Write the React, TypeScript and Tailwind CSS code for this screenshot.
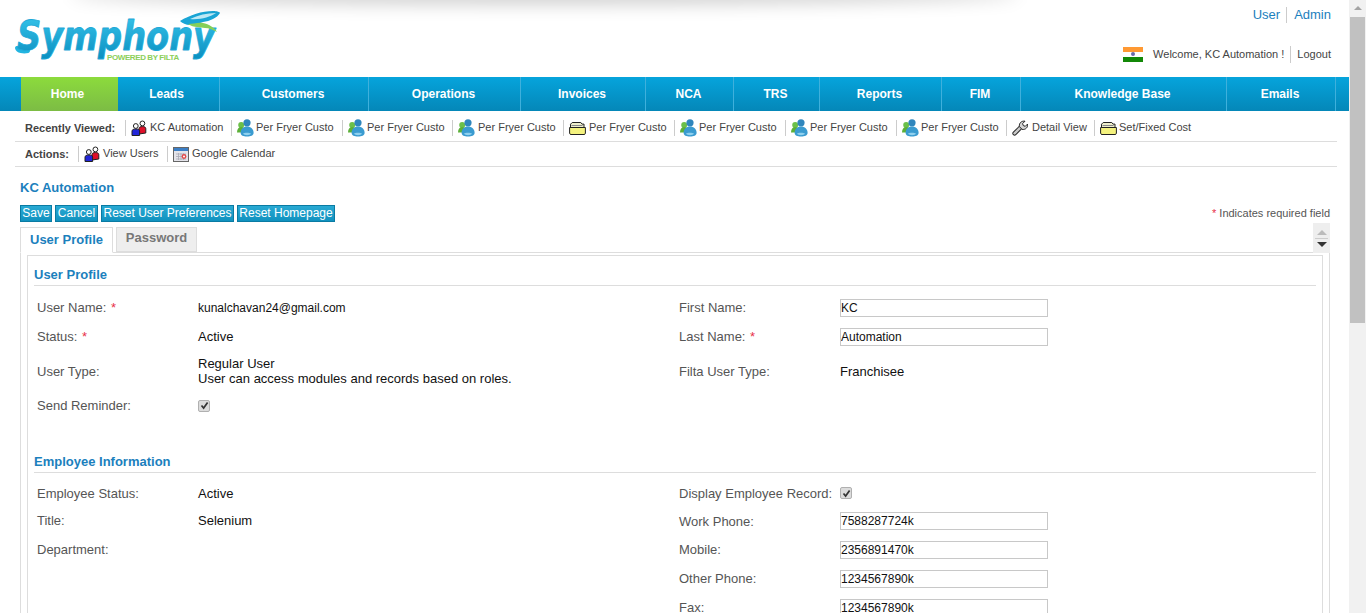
import React from "react";

const font = "font-['Liberation_Sans',Arial,sans-serif]";

const navItems = [
    { label: "Leads", w: "w-[102px] pr-[4px]" },
    { label: "Customers", w: "w-[149px] pr-[2px]" },
    { label: "Operations", w: "w-[152px] pr-[2px]" },
    { label: "Invoices", w: "w-[125px] pr-[2px]" },
    { label: "NCA", w: "w-[88px] pr-[2px]" },
    { label: "TRS", w: "w-[86px] pr-[2px]" },
    { label: "Reports", w: "w-[122px] pr-[2px]" },
    { label: "FIM", w: "w-[79px] pr-[2px]" },
    { label: "Knowledge Base", w: "w-[206px] pr-[2px]" },
    { label: "Emails", w: "w-[109px] pr-[2px]" },
];

const UsersIcon = () => (
    <svg width="16" height="16" viewBox="0 0 16 16" className="shrink-0">
        <circle cx="11.4" cy="3.4" r="2.4" fill="#fff" stroke="#222" strokeWidth="1" />
        <path d="M8 14V8.6c0-1.4 1.3-2 3.4-2s3.4.6 3.4 2V13z" fill="#e0102a" stroke="#222" strokeWidth="1" />
        <circle cx="4.8" cy="6" r="2.4" fill="#fff" stroke="#222" strokeWidth="1" />
        <path d="M1 15.5v-4.4c0-1.4 1.5-2.1 3.8-2.1s3.8.7 3.8 2.1v4.4z" fill="#2226d8" stroke="#222" strokeWidth="1" />
    </svg>
);

const CustomerIcon = () => (
    <svg width="17" height="18" viewBox="0 0 17 18" className="shrink-0">
        <circle cx="4.2" cy="6" r="3" fill="#6cc04a" />
        <path d="M0 13.5C0 10 1.6 8 4.2 8s4.2 2 4.2 5.5z" fill="#5cb038" />
        <circle cx="10" cy="3.8" r="3.6" fill="#2f86bd" />
        <path d="M3.6 14c0-4.2 2.6-6.6 6.4-6.6s6.6 2.4 6.6 6.6c0 2.4-3 3.6-6.6 3.6s-6.4-1.2-6.4-3.6z" fill="#3a9bd0" />
        <path d="M6 14.8c1-1.3 6.6-1.3 8 0-1 1.8-7 1.8-8 0z" fill="#8fd0ee" />
    </svg>
);

const FolderIcon = () => (
    <svg width="17" height="14" viewBox="0 0 17 14" className="shrink-0">
        <path d="M1.5 12.5V3.2L3.2 1.5h8.6l1.2 1.6h2v9.4z" fill="#eeeecb" stroke="#222" strokeWidth="1" />
        <path d="M.6 6.5h15.8v5.7c0 .8-.6 1.3-1.3 1.3H2c-.8 0-1.4-.5-1.4-1.3z" fill="#f4f27e" stroke="#222" strokeWidth="1" />
        <path d="M2.5 4.5h11" stroke="#888" strokeWidth="1" />
    </svg>
);

const CalendarIcon = () => (
    <svg width="16" height="15" viewBox="0 0 16 15" className="shrink-0">
        <rect x="0.5" y="0.5" width="15" height="14" fill="#e4e4ea" stroke="#666" />
        <rect x="1" y="1" width="14" height="3" fill="#3c7fc6" />
        <path d="M3 7h10M3 9.5h10M3 12h10M5.5 6v7M8 6v7M10.5 6v7" stroke="#a9a9b5" strokeWidth="0.8" />
        <circle cx="11" cy="9.5" r="2.4" fill="#e24a4a" />
        <circle cx="11" cy="9.5" r="1" fill="#fff" />
    </svg>
);

const WrenchIcon = () => (
    <svg width="16" height="16" viewBox="0 0 16 16" className="shrink-0">
        <path d="M2.6 13.4 8.8 7.2" stroke="#222" strokeWidth="4.4" strokeLinecap="round" />
        <path d="M2.6 13.4 8.8 7.2" stroke="#c9c9c9" strokeWidth="2.6" strokeLinecap="round" />
        <path d="M7.4 6.6C6.9 3 9.6.6 13 1.2L10.6 3.6l.7 2 2 .7 2.3-2.3c.5 3.3-2 6-5.5 5.4z" fill="#d4d4d4" stroke="#222" strokeWidth="1" strokeLinejoin="round" />
    </svg>
);

const recent = [
    { icon: <UsersIcon />, label: "KC Automation", w: "w-[106px]", gap: "gap-[3px]" },
    { icon: <CustomerIcon />, label: "Per Fryer Custo", w: "w-[111px]", gap: "gap-[2px]" },
    { icon: <CustomerIcon />, label: "Per Fryer Custo", w: "w-[110px]", gap: "gap-[2px]" },
    { icon: <CustomerIcon />, label: "Per Fryer Custo", w: "w-[111px]", gap: "gap-[3px]" },
    { icon: <FolderIcon />, label: "Per Fryer Custo", w: "w-[111px]", gap: "gap-[3px]" },
    { icon: <CustomerIcon />, label: "Per Fryer Custo", w: "w-[111px]", gap: "gap-[2px]" },
    { icon: <CustomerIcon />, label: "Per Fryer Custo", w: "w-[111px]", gap: "gap-[2px]" },
    { icon: <CustomerIcon />, label: "Per Fryer Custo", w: "w-[110px]", gap: "gap-[2px]" },
    { icon: <WrenchIcon />, label: "Detail View", w: "w-[88px]", gap: "gap-[4px]" },
    { icon: <FolderIcon />, label: "Set/Fixed Cost", w: "w-[110px]", gap: "gap-[2px]" },
];

const Logo = () => (
    <div className="relative w-[210px] h-[66px] ml-[14px] mt-[10px]">
        <svg width="210" height="66" viewBox="0 0 210 66" className="absolute left-0 top-0">
            <defs>
                <linearGradient id="logoBlue" x1="0" y1="0" x2="0" y2="1">
                    <stop offset="0" stopColor="#38c6ec" />
                    <stop offset="1" stopColor="#0b8fc0" />
                </linearGradient>
            </defs>
            <path d="M3 38c1 3 6 4 11 3" fill="none" stroke="#22b4e0" strokeWidth="4" strokeLinecap="round" />
            <text x="3" y="40" fontFamily="'DejaVu Sans'" fontWeight="700" fontStyle="italic" fontSize="40" textLength="198" lengthAdjust="spacingAndGlyphs" fill="url(#logoBlue)" stroke="#1fa9d8" strokeWidth="0.8" strokeLinejoin="round">
                Symphony
            </text>
            <path d="M166 11C176 5 188 1 199 1c4 0 7 1 7 2-3 5-10 8-17 9-5 2-9 3-13 3-4 0-8-2-10-4z" fill="#1aa6d6" />
            <path d="M176 9c8-4 17-6 26-6-6 4-16 7-26 6z" fill="#bfeaf6" />
            <path d="M174 14c5 0 10-2 15-1 6 1 12 5 14 9-4-2-8-4-12-4-3 0-5-1-8-1-3 0-6-1-9-3z" fill="#86cf58" />
        </svg>
        <span className="absolute left-[93px] top-[43px] text-[8px] leading-[10px] font-bold tracking-[-0.4px] text-[#8ccf5a] whitespace-nowrap">POWERED BY FILTA</span>
    </div>
);

const Flag = () => (
    <div className="w-5 h-[15px] flex flex-col">
        <div className="h-[5px] bg-[#ff9933]" />
        <div className="h-[5px] bg-white flex items-center justify-center">
            <div className="w-1 h-1 rounded-full bg-[#6a6aa8]" />
        </div>
        <div className="h-[5px] bg-[#138808]" />
    </div>
);

const Star = () => <span className="text-[#e8304a] ml-[1px]">*</span>;

const Field = ({ label, req, children }: { label: string; req?: boolean; children?: React.ReactNode }) => (
    <div className="flex items-center">
        <div className="w-[161px] shrink-0 text-[#555] leading-[15px] whitespace-nowrap">
            {label}
            {req && <> <Star /></>}
        </div>
        <div className="text-[#111] leading-[15px]">{children}</div>
    </div>
);

const TextBox = ({ value }: { value: string }) => (
    <input readOnly value={value} className="block w-[208px] h-[18px] border border-[#c8c8c8] px-0 text-[12px] text-[#111] bg-white outline-none" />
);

const Check = () => (
    <div className="w-[12px] h-[12px] rounded-[2px] bg-[#dcdcdc] border border-[#b0b0b0] flex items-center justify-center">
        <svg width="9" height="9" viewBox="0 0 9 9"><path d="M1.5 4.5 3.6 7 7.6 1.5" fill="none" stroke="#333" strokeWidth="1.7" /></svg>
    </div>
);

const Section = ({ title }: { title: string }) => (
    <div className="h-[30px] border-b border-[#ddd] text-[#1b80bd] font-bold text-[13px] leading-[15px] pt-[11px]">{title}</div>
);

const ActionButton = ({ text, w }: { text: string; w: string }) => (
    <button className={`${w} h-[17px] bg-gradient-to-b from-[#28a9d3] to-[#1092bf] border border-[#0a7ba3] text-white text-[12px] leading-[15px] whitespace-nowrap`}>
        {text}
    </button>
);

export default function App() {
    return (
        <div className={`${font} relative h-[613px] w-[1366px] flex overflow-hidden bg-white text-[12px]`}>
            <div className="w-[1349px] shrink-0 flex flex-col">
                <div className="h-[77px] flex justify-between shrink-0">
                    <Logo />
                    <div className="flex flex-col items-end pr-[18px]">
                        <div className="mt-[7px] flex items-center text-[#1b80bd] text-[13px] leading-[16px]">
                            <span className="pr-[6px] border-r border-[#ccc]">User</span>
                            <span className="pl-[7px]">Admin</span>
                        </div>
                        <div className="mt-[23px] flex items-center text-[#444] text-[11px]">
                            <Flag />
                            <span className="ml-[10px] pr-[6px] border-r border-[#ccc]">Welcome, KC Automation !</span>
                            <span className="pl-[6px]">Logout</span>
                        </div>
                    </div>
                </div>

                <div className="h-[34px] shrink-0 flex bg-gradient-to-b from-[#06a4dc] to-[#0487b8] pl-[21px]">
                    <div className="w-[97px] pr-[4px] bg-gradient-to-b from-[#8cdb3c] to-[#7cbc44] flex items-center justify-center text-white font-bold">Home</div>
                    {navItems.map((item) => (
                        <div key={item.label} className={`${item.w} border-r border-[#3fb0dc] flex items-center justify-center text-white font-bold`}>
                            {item.label}
                        </div>
                    ))}
                </div>

                <div className="mx-[15px] mr-[12px] h-[31px] shrink-0 border-b border-[#ddd] flex items-center text-[11px] text-[#444] pl-[10px] pt-[4px]">
                    <b className="w-[100px] shrink-0 mt-[1px]">Recently Viewed:</b>
                    {recent.map((r, i) => (
                        <div key={i} className={`${r.w} ${r.gap} shrink-0 h-[16px] border-l border-[#ccc] pl-[5px] flex items-center whitespace-nowrap`}>
                            {r.icon}
                            <span className="mb-[1px]">{r.label}</span>
                        </div>
                    ))}
                </div>
                <div className="mx-[15px] mr-[12px] h-[25px] shrink-0 border-b border-[#ddd] flex items-center text-[11px] text-[#444] pl-[10px]">
                    <b className="w-[53px] shrink-0">Actions:</b>
                    <div className="w-[89px] h-[16px] border-l border-[#ccc] pl-[5px] flex items-center gap-[3px]"><UsersIcon /><span className="mb-[2px]">View Users</span></div>
                    <div className="h-[16px] border-l border-[#ccc] pl-[5px] flex items-center gap-[3px]"><CalendarIcon /><span className="mb-[2px]">Google Calendar</span></div>
                </div>

                <div className="px-[20px] pr-[19px] flex flex-col">
                    <div className="mt-[13px] text-[#1b80bd] font-bold text-[13px] leading-[16px]">KC Automation</div>
                    <div className="mt-[9px] flex justify-between items-center">
                        <div className="flex gap-[3px]">
                            <ActionButton text="Save" w="w-[32px]" />
                            <ActionButton text="Cancel" w="w-[43px]" />
                            <ActionButton text="Reset User Preferences" w="w-[133px]" />
                            <ActionButton text="Reset Homepage" w="w-[98px]" />
                        </div>
                        <div className="text-[11px] text-[#555]"><Star /> Indicates required field</div>
                    </div>
                    <div className="mt-[5px] h-[26px] relative flex border-b border-[#ddd]">
                        <div className="h-[26px] w-[93px] bg-white border border-[#ddd] border-b-white text-[#1b80bd] font-bold text-[13px] leading-[24px] text-center">User Profile</div>
                        <div className="ml-[3px] h-[25px] w-[81px] bg-[#eee] border border-[#ddd] text-[#777] font-bold text-[13px] leading-[19px] text-center">Password</div>
                        <div className="absolute right-0 -top-[4px] w-[17px] h-[30px] bg-[#eee] flex flex-col items-center justify-center gap-[3px]">
                            <div className="w-0 h-0 border-x-[5px] border-x-transparent border-b-[5px] border-b-[#bbb]" />
                            <div className="w-[13px] h-px bg-[#ccc]" />
                            <div className="w-0 h-0 border-x-[5px] border-x-transparent border-t-[5px] border-t-[#333]" />
                        </div>
                    </div>
                    <div className="border-x border-[#ddd] px-[6px] pt-[2px]">
                        <div className="border border-[#ddd] border-b-0 px-[6px] text-[13px] h-[400px]">
                            <Section title="User Profile" />
                            <div className="grid grid-cols-[642px_1fr] pl-[3px] auto-rows-min pt-[7px]">
                                <div className="h-[29px] flex"><Field label="User Name:" req><span className="text-[12px]">kunalchavan24@gmail.com</span></Field></div>
                                <div className="h-[29px] flex"><Field label="First Name:"><TextBox value="KC" /></Field></div>
                                <div className="h-[29px] flex"><Field label="Status:" req>Active</Field></div>
                                <div className="h-[29px] flex"><Field label="Last Name:" req><TextBox value="Automation" /></Field></div>
                                <div className="h-[40px] flex"><Field label="User Type:">Regular User<br />User can access modules and records based on roles.</Field></div>
                                <div className="h-[40px] flex"><Field label="Filta User Type:">Franchisee</Field></div>
                                <div className="h-[29px] flex"><Field label="Send Reminder:"><Check /></Field></div>
                            </div>
                            <div className="mt-[23px]"><Section title="Employee Information" /></div>
                            <div className="grid grid-cols-[642px_1fr] pl-[3px] auto-rows-min pt-[6px]">
                                <div className="h-[28px] flex"><Field label="Employee Status:">Active</Field></div>
                                <div className="h-[28px] flex"><Field label="Display Employee Record:"><Check /></Field></div>
                                <div className="h-[28px] flex pb-[1px]"><Field label="Title:">Selenium</Field></div>
                                <div className="h-[28px] flex"><Field label="Work Phone:"><TextBox value="7588287724k" /></Field></div>
                                <div className="h-[29px] flex"><Field label="Department:" /></div>
                                <div className="h-[29px] flex"><Field label="Mobile:"><TextBox value="2356891470k" /></Field></div>
                                <div className="h-[29px]" />
                                <div className="h-[29px] flex"><Field label="Other Phone:"><TextBox value="1234567890k" /></Field></div>
                                <div className="h-[29px]" />
                                <div className="h-[29px] flex"><Field label="Fax:"><TextBox value="1234567890k" /></Field></div>
                            </div>
                        </div>
                    </div>
                </div>
            </div>

            <div className="w-[17px] shrink-0 bg-[#f1f1f1] flex flex-col items-center pt-[6px]">
                <div className="w-0 h-0 border-x-[4px] border-x-transparent border-b-[4px] border-b-[#a3a3a3]" />
                <div className="mt-[7px] w-[15px] h-[306px] bg-[#c1c1c1]" />
            </div>

            <div className="absolute left-[70px] -top-[20px] w-[950px] h-[20px] rounded-[50%] shadow-[0_4px_18px_rgba(0,0,0,0.2)]" />
        </div>
    );
}
